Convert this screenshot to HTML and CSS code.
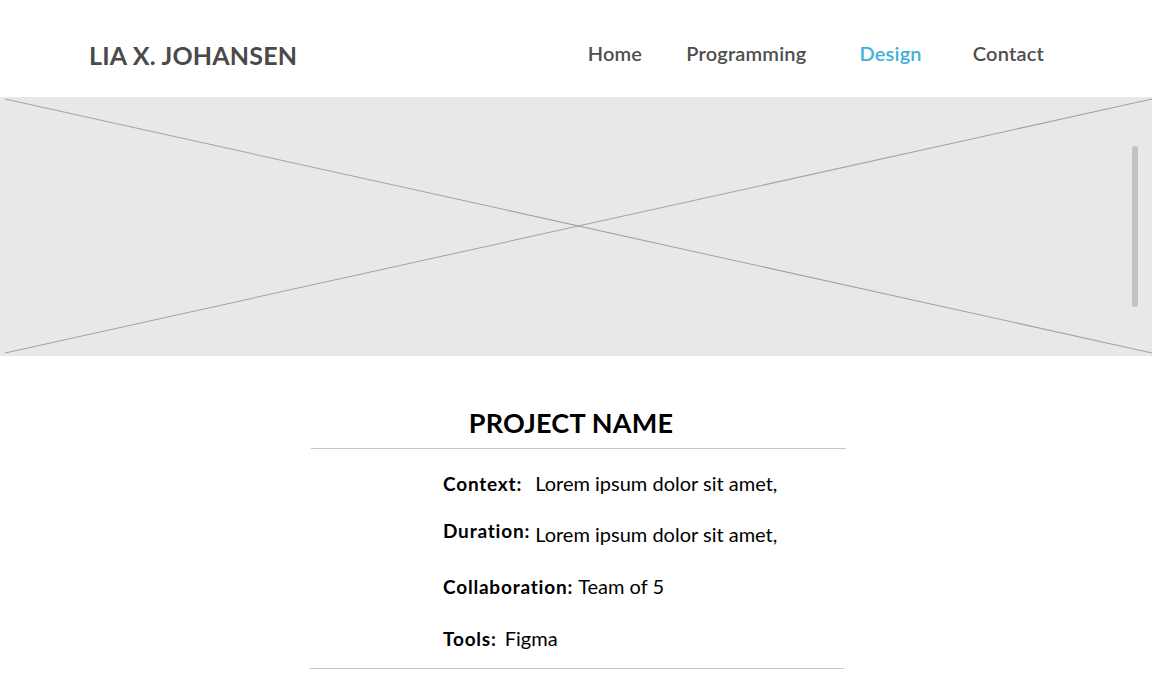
FILE: index.html
```html
<!DOCTYPE html>
<html>
<head>
<meta charset="utf-8">
<link rel="stylesheet" href="styles.css">
</head>
<body>
<header class="site-header">
  <div class="brand">LIA X. JOHANSEN</div>
  <nav class="nav">
    <a class="nav-item nav-home">Home</a>
    <a class="nav-item nav-prog">Programming</a>
    <a class="nav-item nav-design active">Design</a>
    <a class="nav-item nav-contact">Contact</a>
  </nav>
</header>
<section class="hero">
  <svg class="hero-x" viewBox="0 0 1152 258" preserveAspectRatio="none">
    <line x1="5" y1="2" x2="1152" y2="255" stroke="#a3a3a3" stroke-width="1"/>
    <line x1="5" y1="255" x2="1152" y2="2" stroke="#a3a3a3" stroke-width="1"/>
  </svg>
  <div class="scroll-thumb"></div>
</section>
<main class="project">
  <h1 class="project-title">PROJECT NAME</h1>
  <div class="rule rule-top"></div>
  <div class="details">
    <div class="row row-context"><span class="label">Context:</span><span class="value v-context">Lorem ipsum dolor sit amet,</span></div>
    <div class="row row-duration"><span class="label lab-duration">Duration:</span><span class="value v-duration">Lorem ipsum dolor sit amet,</span></div>
    <div class="row row-collab"><span class="label">Collaboration:</span><span class="value v-collab">Team of 5</span></div>
    <div class="row row-tools"><span class="label">Tools:</span><span class="value v-tools">Figma</span></div>
  </div>
  <div class="rule rule-bottom"></div>
</main>
</body>
</html>
```
FILE: styles.css
```css
* { box-sizing: border-box; }
html, body { margin: 0; padding: 0; background: #fff; }
body { font-family: "Lato", "Open Sans", sans-serif; color: #000; width: 1152px; overflow: hidden; }

.site-header {
  height: 97px;
  display: flex;
  align-items: center;
  padding-left: 89px;
}
.brand {
  font-size: 25px;
  font-weight: 700;
  color: #4a4a4a;
  letter-spacing: 0.2px;
  padding-top: 12px;
}
.nav {
  display: flex;
  margin-left: auto;
  padding-right: 108px;
  padding-top: 8px;
}
.nav-item {
  font-size: 20px;
  font-weight: 600;
  color: #4e4e4e;
  letter-spacing: 0.2px;
  text-decoration: none;
}
.nav-prog { margin-left: 44px; }
.nav-design { margin-left: 53px; }
.nav-contact { margin-left: 51px; }
.nav-item.active { color: #3fb0d8; }

.hero {
  position: relative;
  height: 259px;
  background: #e8e8e8;
}
.hero-x { display: block; width: 100%; height: 100%; }
.scroll-thumb {
  position: absolute;
  left: 1132px;
  top: 49px;
  width: 6px;
  height: 161px;
  border-radius: 3px;
  background: #c3c3c3;
}

.project {
  width: 536px;
  margin-left: 310px;
  padding-top: 50px;
}
.project-title {
  margin: 0;
  text-align: center;
  font-size: 27px;
  font-weight: 700;
  line-height: 34px;
  padding-right: 14px;
  letter-spacing: 0.2px;
}
.rule { height: 1px; background: #c6c6c6; }
.rule-top { margin-top: 8px; margin-left: 1px; }
.rule-bottom { margin-top: 16px; margin-right: 2px; }

.details {
  padding-left: 133px;
  padding-top: 21px;
  display: flex;
  flex-direction: column;
}
.row {
  display: flex;
  align-items: baseline;
  font-size: 20px;
  line-height: 26px;
}
.row-duration { margin-top: 24px; }
.row-collab { margin-top: 25px; }
.row-tools { margin-top: 25px; }
.label { font-weight: 700; font-size: 19px; letter-spacing: 0.8px; }
.lab-duration { position: relative; top: -4px; }
.value { font-weight: 400; }
.v-context { margin-left: 13px; }
.v-duration { margin-left: 5px; }
.v-collab { margin-left: 5px; }
.v-tools { margin-left: 8px; }
```
